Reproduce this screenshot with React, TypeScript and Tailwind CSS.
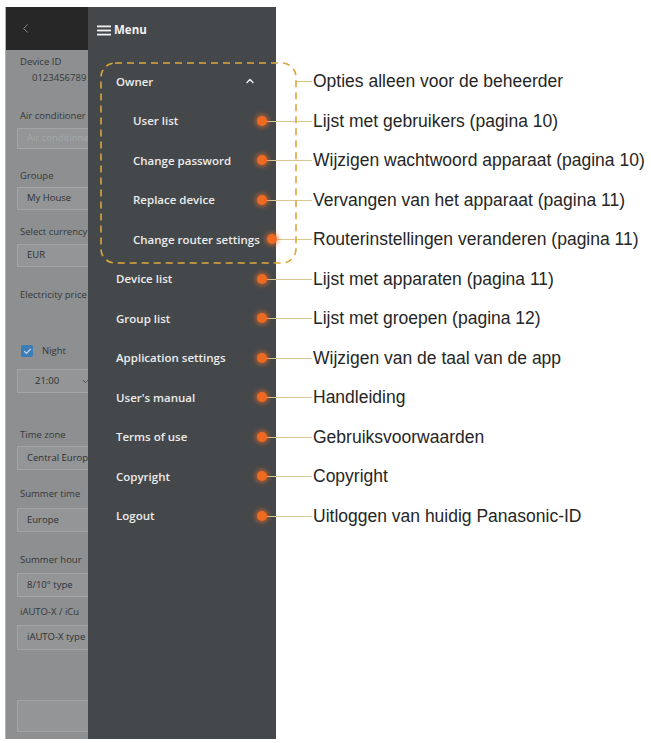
import React from 'react';
import { ChevronLeft, ChevronUp, ChevronDown, Check } from 'lucide-react';

type Row = { text: string; sub?: boolean; label: string; owner?: boolean; far?: boolean };

const rows: Row[] = [
  { text: 'Owner', label: 'Opties alleen voor de beheerder', owner: true },
  { text: 'User list', sub: true, label: 'Lijst met gebruikers (pagina 10)' },
  { text: 'Change password', sub: true, label: 'Wijzigen wachtwoord apparaat (pagina 10)' },
  { text: 'Replace device', sub: true, label: 'Vervangen van het apparaat (pagina 11)' },
  { text: 'Change router settings', sub: true, label: 'Routerinstellingen veranderen (pagina 11)', far: true },
  { text: 'Device list', label: 'Lijst met apparaten (pagina 11)' },
  { text: 'Group list', label: 'Lijst met groepen (pagina 12)' },
  { text: 'Application settings', label: 'Wijzigen van de taal van de app' },
  { text: "User's manual", label: 'Handleiding' },
  { text: 'Terms of use', label: 'Gebruiksvoorwaarden' },
  { text: 'Copyright', label: 'Copyright' },
  { text: 'Logout', label: 'Uitloggen van huidig Panasonic-ID' },
];

function Lbl({ children, className = '' }: { children: React.ReactNode; className?: string }) {
  return (
    <div className={`pl-[14px] h-[12px] leading-[12px] text-[9.5px] text-[#36383a] whitespace-nowrap ${className}`}>
      {children}
    </div>
  );
}

function Box({ children, className = '', h = 'h-[23px]' }: { children?: React.ReactNode; className?: string; h?: string }) {
  return (
    <div
      className={`ml-[11px] ${h} w-[90px] shrink-0 border border-[#a2a4a5] bg-[#939596] flex items-center pl-[9px] text-[9.5px] text-[#2f3133] whitespace-nowrap ${className}`}
    >
      {children}
    </div>
  );
}

function LeftPanel() {
  return (
    <div className="w-[83px] h-[732px] flex flex-col overflow-hidden bg-[#8d8f90] shrink-0 border-l border-[#b0b2b3]" style={{ fontFamily: '"Open Sans", sans-serif' }}>
      <div className="h-[43px] bg-[#272727] flex items-center pl-[12px] shrink-0">
        <ChevronLeft size={15} strokeWidth={1.6} color="#8e8e8e" />
      </div>
      <Lbl className="mt-[6px]">Device ID</Lbl>
      <Lbl className="mt-[4px] pl-[26px]">0123456789</Lbl>
      <Lbl className="mt-[26px]">Air conditioner</Lbl>
      <Box className="mt-[6px] text-[#a6a8a9]" h="h-[21px]">Air conditioner name</Box>
      <Lbl className="mt-[21px]">Groupe</Lbl>
      <Box className="mt-[5px]">My House</Box>
      <Lbl className="mt-[16px]">Select currency</Lbl>
      <Box className="mt-[6px]">EUR</Box>
      <Lbl className="mt-[22px]">Electricity price</Lbl>
      <div className="mt-[43px] h-[14px] flex items-center pl-[15px] gap-[9px] text-[9.5px] text-[#36383a]">
        <div className="w-[12px] h-[12px] rounded-[2px] bg-[#3b7db6] flex items-center justify-center">
          <Check size={9} strokeWidth={3} color="#c9d9e8" />
        </div>
        <span>Night</span>
      </div>
      <Box className="mt-[11px] h-[24px] pl-[17px] gap-[22px]">
        <span>21:00</span>
        <ChevronDown size={9} strokeWidth={2} color="#3b3d3f" />
      </Box>
      <Lbl className="mt-[36px]">Time zone</Lbl>
      <Box className="mt-[5px] h-[24px]">Central Europe</Box>
      <Lbl className="mt-[18px]">Summer time</Lbl>
      <Box className="mt-[8px] h-[24px]">Europe</Box>
      <Lbl className="mt-[22px]">Summer hour</Lbl>
      <Box className="mt-[7px] h-[24px]">8/10° type</Box>
      <Lbl className="mt-[9px]">iAUTO-X / iCu</Lbl>
      <Box className="mt-[7px] h-[25px]">iAUTO-X type</Box>
      <Box className="mt-[50px] h-[32px]"></Box>
    </div>
  );
}

export default function App() {
  return (
    <div className="w-[651px] h-[743px] bg-white flex pt-[7px] pl-[5px] overflow-hidden">
      <LeftPanel />
      <div className="relative flex-1 h-[732px] flex flex-col">
        {/* header */}
        <div className="flex h-[46px] shrink-0">
          <div className="w-[188px] bg-[#45484a] flex items-center pl-[9px] gap-[2px]" style={{ fontFamily: '"Open Sans", sans-serif' }}>
            <svg width="15" height="11" viewBox="0 0 15 11">
              <rect x="0" y="0.5" width="14" height="1.8" fill="#f2f2f2" />
              <rect x="0" y="4.6" width="14" height="1.8" fill="#f2f2f2" />
              <rect x="0" y="8.7" width="14" height="1.8" fill="#f2f2f2" />
            </svg>
            <span className="text-[11.5px] font-bold text-[#f2f2f2]">Menu</span>
          </div>
        </div>
        <div className="flex h-[8.5px] shrink-0">
          <div className="w-[188px] bg-[#45484a]" />
        </div>
        {rows.map((r) => (
          <div key={r.text} className="relative flex h-[39.5px] shrink-0">
            <div
              className={`w-[188px] bg-[#45484a] flex items-center ${r.sub ? 'pl-[45px]' : 'pl-[28px]'} text-[11.5px] font-semibold text-[#ececec] whitespace-nowrap`}
              style={{ fontFamily: '"Open Sans", sans-serif' }}
            >
              {r.text}
              {r.owner && (
                <span className="ml-auto mr-[20px] flex">
                  <ChevronUp size={12} strokeWidth={3} color="#eeeeee" />
                </span>
              )}
            </div>
            {r.owner ? (
              <div className="absolute left-[208px] w-[16px] top-1/2 h-px bg-[#d9c27a]" />
            ) : (
              <>
                <div className={`absolute ${r.far ? 'left-[184px] w-[40px]' : 'left-[174px] w-[50px]'} top-1/2 h-px bg-[#d9c88f]`} />
                <div
                  className={`absolute ${r.far ? 'left-[179px]' : 'left-[169px]'} top-1/2 -mt-[5px] w-[10px] h-[10px] rounded-full bg-[#ef6a21] shadow-[0_0_4px_2px_rgba(240,110,40,0.55)]`}
                />
              </>
            )}
            <div
              className="flex-1 flex items-center pl-[37px] text-[17.5px] text-[#262626] whitespace-nowrap"
              style={{ fontFamily: '"Liberation Sans", Arial, sans-serif' }}
            >
              {r.label}
            </div>
          </div>
        ))}
        <div className="flex flex-1">
          <div className="w-[188px] bg-[#45484a]" />
        </div>
        {/* dashed owner group outline */}
        <svg className="absolute left-[12px] top-[55px] pointer-events-none" width="197" height="202" viewBox="0 0 197 202">
          <rect x="1" y="1" width="195" height="200" rx="14" fill="none" stroke="#dba73c" strokeWidth="1.6" strokeDasharray="7 5" />
        </svg>
      </div>
    </div>
  );
}
